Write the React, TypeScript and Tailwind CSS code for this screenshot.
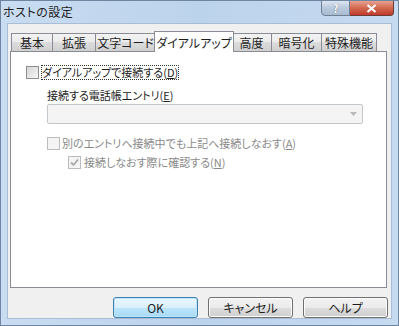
import React from "react";

const font = {
  fontFamily: '"Noto Sans CJK JP", "Noto Sans", sans-serif',
  fontFeatureSettings: '"palt"',
};

const tabs = [
  { label: "基本", w: "w-[42px]" },
  { label: "拡張", w: "w-[44px]" },
  { label: "文字コード", w: "w-[61px]" },
  { label: "ダイアルアップ", w: "w-[80px]", active: true },
  { label: "高度", w: "w-[41px]" },
  { label: "暗号化", w: "w-[51px]" },
  { label: "特殊機能", w: "w-[56px]" },
];

function Check({ checked, disabled }: { checked?: boolean; disabled?: boolean }) {
  return (
    <span
      className={`flex items-center justify-center w-[13px] h-[13px] shrink-0 border ${
        disabled ? "border-[#bcbcbc] bg-[#f4f4f4]" : "border-[#8e8f8f] bg-[linear-gradient(135deg,#d6d6d6,#f6f6f6)]"
      }`}
    >
      {checked && (
        <svg width="9" height="9" viewBox="0 0 9 9">
          <path d="M1 4.5 L3.5 7 L8 1.5" fill="none" stroke="#a9a9a9" strokeWidth="1.8" />
        </svg>
      )}
    </span>
  );
}

export default function App() {
  return (
    <div
      className="w-[399px] h-[326px] flex flex-col bg-[linear-gradient(90deg,#c9dcf1,#bcd3ec_50%,#c6daf0)] border border-[#6f86a3] overflow-hidden whitespace-nowrap"
      style={font}
    >
      {/* Title bar */}
      <div className="h-[22px] flex justify-between items-start shrink-0">
        <span className="pl-[2px] pt-[3px] text-[12px] leading-[15px] text-[#1e1e1e] tracking-[0.5px]">ホストの設定</span>
        <div className="flex mr-[4px] -mt-px">
          <div className="w-[29px] h-[16px] flex items-center justify-center rounded-bl-[4px] border border-[#6e7f93] bg-[linear-gradient(#dbe6f2,#b9c9dc_50%,#a8bbd2)] text-white text-[11px] font-bold leading-none [text-shadow:0_0_1px_#3b5170]">
            ?
          </div>
          <div className="w-[44px] h-[16px] flex items-center justify-center rounded-br-[4px] border border-l-0 border-[#6e3a35] bg-[linear-gradient(#e6a291,#d2694f_50%,#c0392a)]">
            <svg width="11" height="9" viewBox="0 0 11 9">
              <path d="M1.5 1 L9.5 8 M9.5 1 L1.5 8" stroke="#ffffff" strokeWidth="2.2" />
            </svg>
          </div>
        </div>
      </div>

      {/* Client area */}
      <div className="mx-[6px] mb-[7px] flex-1 flex flex-col bg-[#f0f0f0] border border-[#a9bdd5] text-[12px] leading-[15px] text-[#1e1e1e]">
        {/* Tab row */}
        <div className="flex items-end h-[20px] mt-[7px] pl-[3px]">
          {tabs.map((t) =>
            t.active ? (
              <div
                key={t.label}
                className={`${t.w} h-[21px] -mb-px -mx-[2px] z-10 flex justify-center pt-[3px] bg-white border border-b-0 border-[#898c95]`}
              >
                {t.label}
              </div>
            ) : (
              <div
                key={t.label}
                className={`${t.w} h-[18px] -ml-px first:ml-0 flex justify-center items-center bg-[linear-gradient(#f3f3f3,#ebebeb_50%,#dddddd_50%,#cfcfcf)] border border-b-0 border-[#898c95]`}
              >
                {t.label}
              </div>
            )
          )}
        </div>

        {/* Tab panel */}
        <div className="ml-[2px] w-[377px] h-[237px] bg-white border border-[#898c95] pl-[15px] pt-[13px] flex flex-col text-[11px]">
          <div className="flex items-center h-[15px]">
            <Check />
            <span className="ml-[2px] px-[1px] outline outline-1 outline-dotted outline-[#333] -outline-offset-1">
              ダイアルアップで接続する(<span className="underline">D</span>)
            </span>
          </div>

          <div className="ml-[21px] mt-[8px] h-[15px]">
            接続する電話帳エントリ(<span className="underline">E</span>)
          </div>

          <div className="ml-[21px] mt-[1px] w-[316px] h-[20px] rounded-[2px] border border-[#c3c8cd] bg-[#f4f4f4] flex items-center justify-end pr-[5px]">
            <svg width="7" height="4" viewBox="0 0 7 4">
              <path d="M0 0 H7 L3.5 4 Z" fill="#b8b8b8" />
            </svg>
          </div>

          <div className="ml-[21px] mt-[12px] flex items-center h-[15px] text-[#8a8a8a]">
            <Check disabled />
            <span className="ml-[2px]">
              別のエントリへ接続中でも上記へ接続しなおす(<span className="underline">A</span>)
            </span>
          </div>

          <div className="ml-[42px] mt-[4px] flex items-center h-[15px] text-[#8a8a8a]">
            <Check disabled checked />
            <span className="ml-[3px]">
              接続しなおす際に確認する(<span className="underline">N</span>)
            </span>
          </div>
        </div>

        {/* Buttons */}
        <div className="flex justify-end gap-[10px] pr-[3px] mt-[9px]">
          <button className="w-[85px] h-[21px] rounded-[3px] border border-[#3c7fb1] bg-[linear-gradient(#eaf6fd,#d9f0fc_50%,#bee6fd_50%,#a7d9f5)] shadow-[inset_0_0_0_1px_#bfe7fb] leading-none">
            OK
          </button>
          <button className="w-[85px] h-[21px] rounded-[3px] border border-[#707070] bg-[linear-gradient(#f2f2f2,#ebebeb_50%,#dddddd_50%,#cfcfcf)] shadow-[inset_0_0_0_1px_#fcfcfc] leading-none">
            キャンセル
          </button>
          <button className="w-[85px] h-[21px] rounded-[3px] border border-[#707070] bg-[linear-gradient(#f2f2f2,#ebebeb_50%,#dddddd_50%,#cfcfcf)] shadow-[inset_0_0_0_1px_#fcfcfc] leading-none">
            ヘルプ
          </button>
        </div>
      </div>
    </div>
  );
}
